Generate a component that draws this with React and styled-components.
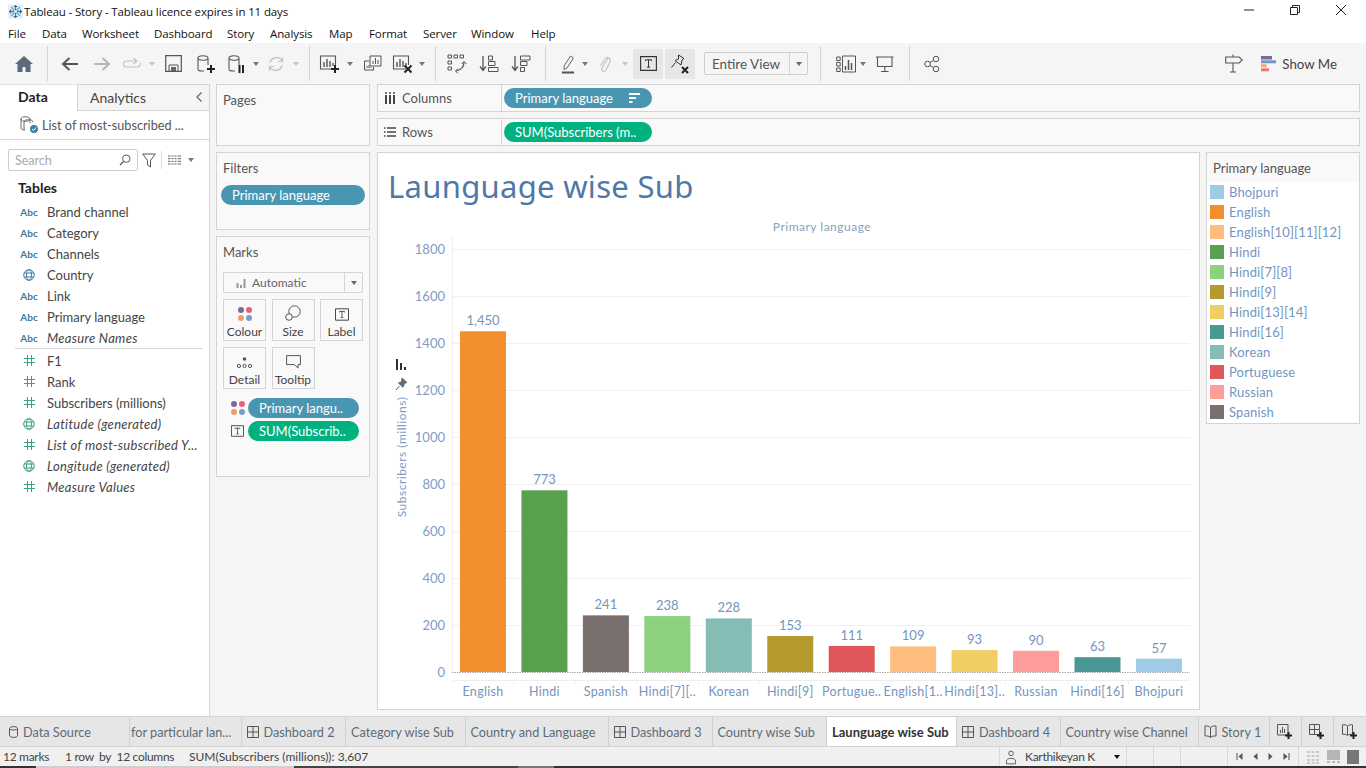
import React from 'react';
import styled, { createGlobalStyle } from 'styled-components';

const Global = createGlobalStyle`
  html, body { margin: 0; padding: 0; background: #f5f5f5; overflow: hidden; }
  * { box-sizing: border-box; }
`;

const Page = styled.div`
  width: 1366px; height: 768px; display: flex; flex-direction: column;
  font-family: "Lato", "Open Sans", sans-serif; color: #333; background: #f5f5f5; overflow: hidden;
`;
const TitleBar = styled.div`
  height: 22px; background: #fff; display: flex; align-items: center; padding: 0 2px 0 8px;
  font: 11.5px "Open Sans", sans-serif; color: #111;
`;
const TitleText = styled.span` margin-left: 1px; flex: 1; letter-spacing: -0.13px; `;
const WinBtn = styled.div` width: 46px; height: 20px; display: flex; align-items: center; justify-content: center; margin-bottom: 2px; `;
const MenuBar = styled.div`
  height: 21px; background: #fff; display: flex; align-items: center; padding-top: 1px;
  font: 11.5px "Open Sans", sans-serif; color: #111;
`;
const MenuItem = styled.span` width: ${p => p.$w}px; padding-left: ${p => p.$pl || 0}px; letter-spacing: -0.1px; `;
const Toolbar = styled.div` height: 41px; background: #f5f5f5; display: flex; align-items: center; padding-left: 8px; `;
const Slot = styled.div`
  width: ${p => p.$w}px; height: 30px; flex: none; display: flex; align-items: center; justify-content: center;
  margin-left: ${p => p.$ml || 0}px;
  background: ${p => p.$active ? '#e6e6e6' : 'transparent'};
`;
const SmallSlot = styled(Slot)` height: 22px; `;
const Sep = styled.div`
  width: ${p => p.$w}px; height: 35px; flex: none; position: relative; display: flex; justify-content: center;
  &::before { content: ""; width: 1px; height: 100%; background: #d4d4d4; }
`;
const Caret = styled.span`
  width: 0; height: 0; border-left: 3px solid transparent; border-right: 3px solid transparent;
  border-top: 4px solid ${p => p.$c || '#777'};
  margin-left: ${p => p.$ml || 0}px;
`;
const ViewSelect = styled.div`
  width: 104px; height: 23px; margin-left: 9px; flex: none; border: 1px solid #cfcfcf; border-radius: 2px; display: flex; align-items: center;
  font-size: 13.5px; color: #555; background: #f5f5f5;
`;
const ViewText = styled.span` flex: 1; padding-left: 7px; `;
const ViewDrop = styled.span` width: 18px; height: 100%; border-left: 1px solid #d4d4d4; display: flex; align-items: center; justify-content: center; `;
const ToolRight = styled.div` margin-left: auto; display: flex; align-items: center; padding-right: 29px; `;
const ShowMe = styled.div` display: flex; align-items: center; gap: 6px; font-size: 13.3px; color: #444; margin-left: 12px; `;

const Main = styled.div` flex: 1; display: flex; min-height: 0; `;
const LeftPanel = styled.div` width: 210px; flex: none; background: #fff; border-right: 1px solid #d4d4d4; display: flex; flex-direction: column; `;
const PanelTabs = styled.div` height: 27px; display: flex; background: #f5f5f5; `;
const DataTab = styled.div`
  width: 78px; background: #fff; border-right: 1px solid #d4d4d4; border-top: 1px solid #e4e4e4; font-weight: 700; font-size: 14px; color: #222;
  padding: 3px 0 0 18px;
`;
const AnalyticsTab = styled.div`
  flex: 1; border-top: 1px solid #d4d4d4; border-bottom: 1px solid #d4d4d4; font-size: 14px; color: #444; display: flex; align-items: center; justify-content: space-between;
  padding: 0 6px 1px 12px;
`;
const SourceRow = styled.div` height: 29px; border-bottom: 1px solid #d4d4d4; display: flex; align-items: center; gap: 2px; padding-left: 20px; font-size: 12.7px; color: #555; `;
const SearchRow = styled.div` height: 30px; margin-top: 9px; display: flex; align-items: flex-start; padding-left: 8px; `;
const SearchBox = styled.div`
  width: 130px; height: 22px; border: 1px solid #ccc; border-radius: 2px; display: flex; align-items: center; justify-content: space-between;
  padding: 0 6px; font-size: 12.5px; color: #aaa;
`;
const SearchTools = styled.div` display: flex; align-items: center; height: 22px; margin-left: 4px; `;
const MiniDivider = styled.span` width: 1px; height: 18px; background: #ddd; margin: 0 6px 0 5px; `;
const TablesHead = styled.div` font-weight: 700; font-size: 14px; color: #222; padding-left: 18px; height: 17px; line-height: 17px; margin-bottom: 5px; `;
const FieldRow = styled.div` height: 21px; display: flex; align-items: center; font-size: 13px; color: #444; padding-left: 20px; `;
const FieldIcon = styled.span` width: 18px; margin-right: 9px; flex: none; font-size: 10px; font-weight: 700; color: #3f7a9c; display: flex; align-items: center; justify-content: center; `;
const FieldName = styled.span` font-style: ${p => p.$i ? 'italic' : 'normal'}; letter-spacing: ${p => p.$i ? '0.3px' : '0'}; white-space: nowrap; `;
const FieldRule = styled.div` height: 1px; background: #d9d9d9; margin: 0 6px 1px 15px; `;

const MidCol = styled.div` width: 167px; flex: none; padding: 0 7px 0 6px; display: flex; flex-direction: column; gap: 6px; `;
const SideCard = styled.div`
  height: ${p => p.$h}px; background: #f9f9f9; border: 1px solid #d4d4d4; padding: 0 5px 0 6px;
`;
const CardTitle = styled.div` font-size: 13px; color: #555; line-height: 16px; padding-top: 7px; box-sizing: content-box; `;
const Pill = styled.div`
  height: 20px; border-radius: 10px; background: ${p => p.$green ? '#02b180' : '#4996b2'}; color: #fff; font-size: 13px; display: flex; align-items: center; justify-content: space-between;
  width: ${p => p.$w ? `${p.$w}px` : 'auto'}; padding: 0 12px 0 11px; white-space: nowrap; flex: none;
`;
const FilterPill = styled(Pill)` margin: 9px 0 0 -2px; width: 144px; `;
const MarkSelect = styled.div`
  height: 21px; margin: 12px 0 0 0; width: 140px; border: 1px solid #d4d4d4; border-radius: 1px; display: flex; align-items: center; font-size: 12px; color: #666; background: #f9f9f9;
`;
const MarkSelectText = styled.span` flex: 1; display: flex; align-items: center; gap: 6px; padding-left: 12px; `;
const MarkDrop = styled.span` width: 18px; height: 100%; border-left: 1px solid #d4d4d4; display: flex; align-items: center; justify-content: center; `;
const MarkGrid = styled.div` display: grid; grid-template-columns: 43px 43px 43px; column-gap: 5.5px; row-gap: 6px; margin-top: 6px; `;
const MarkBtn = styled.div`
  height: 42px; border: 1px solid #d4d4d4; display: flex; flex-direction: column; align-items: center; justify-content: flex-end; font-size: 12px; color: #444; padding-bottom: 1px; gap: 3px; white-space: nowrap;
`;
const MarkPillRow = styled.div` display: flex; align-items: center; margin-top: ${p => p.$mt}px; padding-left: 7px; gap: 3px; `;
const MarkPillIcon = styled.span` width: 15px; flex: none; display: flex; justify-content: center; `;

const RightCol = styled.div` flex: 1; min-width: 0; padding: 0 6px 7px 0; display: flex; flex-direction: column; gap: 6px; `;
const Shelf = styled.div` height: 28px; flex: none; display: flex; background: #f9f9f9; border: 1px solid #d4d4d4; `;
const ShelfLabel = styled.div` width: 124px; border-right: 1px solid #d4d4d4; display: flex; align-items: center; gap: 6px; padding-left: 6px; font-size: 13px; color: #555; `;
const ShelfBody = styled.div` flex: 1; display: flex; align-items: center; padding: 0 0 0 2px; `;
const VizRow = styled.div` flex: 1; min-height: 0; display: flex; gap: 6px; align-items: flex-start; `;
const VizCard = styled.div` width: 823px; height: 558px; flex: none; background: #fff; border: 1px solid #d4d4d4; `;
const VizTitle = styled.h1`
  margin: 0; height: 60px; padding: 15px 0 0 10px; font-weight: 400; font-size: 31px; line-height: 36px; color: #4e79a7; letter-spacing: 0.3px; font-family: "Noto Sans", sans-serif; white-space: nowrap;
`;
const ChartSvg = styled.svg` display: block; font-family: "Lato", sans-serif; `;
const Legend = styled.div` width: 154px; height: 272px; flex: none; background: #fff; border: 1px solid #d4d4d4; `;
const LegendHead = styled.div` height: 29px; background: #f9f9f9; font-size: 13px; color: #555; display: flex; align-items: center; padding-left: 6px; `;
const LegendRow = styled.div` height: 20px; display: flex; align-items: center; gap: 5px; padding-left: 3px; font-size: 13px; color: #7396c0; letter-spacing: 0.15px; `;
const Swatch = styled.span` width: 14px; height: 14px; flex: none; background: ${p => p.$c}; `;

const TabBar = styled.div` height: 31px; flex: none; display: flex; background: #e6e6e6; border-top: 1px solid #d4d4d4; border-bottom: 1px solid #d4d4d4; `;
const SheetTab = styled.div`
  width: ${p => p.$w}px; flex: none; border-right: 1px solid #d0d0d0; display: flex; align-items: center; gap: 5px; white-space: nowrap; overflow: hidden; justify-content: ${p => p.$center ? 'center' : 'flex-start'};
  padding-left: ${p => p.$pl ?? 5}px; font-size: ${p => p.$active ? 13 : 12.7}px; color: ${p => p.$active ? '#333' : '#5d6b78'};
  background: ${p => p.$active ? '#fff' : 'transparent'}; font-weight: ${p => p.$active ? 700 : 400};
`;
const StatusBar = styled.div` height: 19px; flex: none; display: flex; background: #f0f0f0; font-size: 12px; color: #444; `;
const StatusLeft = styled.div` flex: 1; display: flex; align-items: center; padding-left: 3px; white-space: nowrap; `;
const StatusText = styled.span` width: ${p => p.$w}px; flex: none; letter-spacing: -0.3px; `;
const StatusCell = styled.div`
  width: ${p => p.$w}px; flex: none; border-left: 1px solid #d9d9d9; display: flex; align-items: center; gap: ${p => p.$gap || 0}px; padding: 0 ${p => p.$pad || 0}px; justify-content: ${p => p.$j || 'flex-start'}; white-space: nowrap; letter-spacing: -0.3px;
`;
const BottomStrip = styled.div`
  height: 2px; flex: none;
  background: linear-gradient(90deg, #333 0 36px, #cfcfcf 36px 294px, #444 294px 518px, #777 518px 554px, #333 554px);
`;

const Ic = ({ w = 20, h = 20, children, ...r }) => (
  <svg width={w} height={h} viewBox={`0 0 ${w} ${h}`} fill="none" {...r}>{children}</svg>
);

const Logo = () => (
  <Ic w={15} h={15}>
    <rect width="15" height="15" fill="#e9f1f6" />
    <g stroke="#2f7fae" strokeWidth="1.300"><path d="M7.500 1v13M1 7.500h13" /></g>
    <g stroke="#5d9fc6" strokeWidth="1.100"><path d="M3 3l9 9M12 3l-9 9" /></g>
    <g stroke="#2a6a94" strokeWidth="1"><path d="M5.500 2.500h4M5.500 12.500h4M2.500 5.500v4M12.500 5.500v4" /></g>
    <rect x="6.300" y="6.300" width="2.400" height="2.400" fill="#fff" />
  </Ic>
);
const Home = () => <Ic w={20} h={18}><path d="M10 1 1 9h2.500v8h5v-5h3v5h5V9H19z" fill="#5c6b7a" /></Ic>;
const ArrowL = ({ c = '#555' }) => <Ic w={18} h={16}><path d="M17 8H2M8.500 2 2 8l6.500 6" stroke={c} strokeWidth="2" /></Ic>;
const ArrowR = ({ c = '#b5b5b5' }) => <Ic w={18} h={16}><path d="M1 8h15M9.500 2 16 8l-6.500 6" stroke={c} strokeWidth="2" /></Ic>;
const Redo = () => <Ic w={20} h={14}><path d="M14 4H4.500a3 3 0 0 0 0 6h11a3 3 0 0 0 2.500-4M11.500 1 15 4l-3.500 3" stroke="#c4c4c4" strokeWidth="1.200" /></Ic>;
const Save = () => <Ic w={17} h={17}><path d="M.7.700h15.600v15.600H.7z" stroke="#555" strokeWidth="1.200" /><path d="M4 16v-6h9v6" stroke="#555" /><path d="M6 12h5v4H6z" fill="#666" /></Ic>;
const Cyl = ({ children }) => (
  <Ic w={20} h={20}>
    <path d="M2 4c0-3 10-3 10 0v7M2 4c0 3 10 3 10 0M2 4v11c0 1.500 2 2 4 2h2" stroke="#555" strokeWidth="1.100" />
    {children}
  </Ic>
);
const Plus = ({ x, y, s = 4, c = '#222' }) => <path d={`M${x - s} ${y}h${2 * s}M${x} ${y - s}v${2 * s}`} stroke={c} strokeWidth="2" />;
const Cross = ({ x, y, s = 3.500 }) => <path d={`M${x - s} ${y - s}l${2 * s} ${2 * s}M${x + s} ${y - s}l${-2 * s} ${2 * s}`} stroke="#222" strokeWidth="2" />;
const Refresh = () => <Ic w={18} h={18}><path d="M3 7.500A6.500 6.500 0 0 1 15 6M15 10.500A6.500 6.500 0 0 1 3 12" stroke="#c4c4c4" strokeWidth="1.500" /><path d="M15.500 2v4.500H11M2.500 16v-4.500H7" stroke="#c4c4c4" strokeWidth="1.200" /></Ic>;
const Sheet = ({ children }) => (
  <Ic w={22} h={20}>
    <path d="M14 15H1.500V2h15v9" stroke="#555" strokeWidth="1.100" />
    <path d="M5 13V8M8 13V5M11 13V7M14 12V9" stroke="#555" strokeWidth="1.400" />
    {children}
  </Ic>
);
const Dup = () => (
  <Ic w={20} h={18}>
    <path d="M7 1h11v10H7z" stroke="#555" /><path d="M10 9V6M12.500 9V3M15 9V5" stroke="#555" />
    <path d="M6 6H1.500v9h9v-3" stroke="#555" /><path d="M4 13v-2M6 13v-3M8 13v-1" stroke="#555" />
  </Ic>
);
const Swap = () => (
  <Ic w={20} h={20}>
    <path d="M1 1h3.500v3H1zM7 1h3.500v3H7zM13 1h3.500v3H13zM1 7h3.500v3H1zM1 13h3.500v3H1z" stroke="#555" />
    <path d="M17 8c0 5-3 8-8 9" stroke="#555" strokeWidth="1.200" /><path d="M14.500 10 17 7.500l2.500 2.500M11 14.500 8.500 17l2.500 2.500" stroke="#555" />
  </Ic>
);
const SortA = () => (
  <Ic w={20} h={18}>
    <path d="M4 1v14M1 11.500 4 15.500l3-4" stroke="#555" strokeWidth="1.300" />
    <path d="M9.500 1h4v4h-4zM9.500 6.500h6.500v4H9.500zM9.500 12.500h9.500v4H9.500z" stroke="#555" />
  </Ic>
);
const SortD = () => (
  <Ic w={20} h={18}>
    <path d="M4 1v14M1 11.500 4 15.500l3-4" stroke="#555" strokeWidth="1.300" />
    <path d="M9.500 1h9.500v4H9.500zM9.500 6.500h6.500v4H9.500zM9.500 12.500h4v4h-4z" stroke="#555" />
  </Ic>
);
const Pen = () => (
  <Ic w={14} h={20}><path d="M3 12 9.500 2l3 2L6 14l-3 1.500z" stroke="#666" /><path d="M1 18.500h12" stroke="#555" strokeWidth="2" /></Ic>
);
const Clip = () => (
  <Ic w={14} h={20}><path d="M10 4 4 14c-1.500 3 2.500 4.500 4 2l4-8c1.500-4-3-6-5-3L2.500 12" stroke="#c4c4c4" strokeWidth="1.200" /></Ic>
);
const TBox = ({ s = 15, w = 17 }) => (
  <svg width={w} height={s} viewBox="0 0 17 15" fill="none"><path d="M.6.600h15.800v13.800H.6z" stroke="#333" strokeWidth="1.100" /><path d="M5.500 5V3.800h6V5M8.500 3.800v7.400M7 11.200h3" stroke="#333" /></svg>
);
const PinX = () => (
  <Ic w={22} h={22}>
    <path d="M9.500 2l5.500 3.500-2 1.500-1 5-6-4.500 3.500-1.500zM6.500 9.500 2.500 14.500" stroke="#333" strokeWidth="1" />
    <Cross x={16} y={17} s={3} />
  </Ic>
);
const ShowTable = () => (
  <Ic w={20} h={18}>
    <path d="M.7 2h3.500v3.500H.7zM.7 7.500h3.500V11H.7zM.7 13h3.500v3.500H.7z" stroke="#555" />
    <path d="M6.500 1h13v16h-13z" stroke="#555" /><path d="M9.500 15v-4M12.500 15V5M15.500 15V8" stroke="#555" strokeWidth="1.500" />
  </Ic>
);
const Present = () => (
  <Ic w={18} h={18}><path d="M0 2h17.500M1.500 2v9.500h14.500V2M8.800 11.500v4.500M5 16.500h7.500" stroke="#555" strokeWidth="1.100" /></Ic>
);
const Share = () => (
  <Ic w={16} h={18}>
    <circle cx="3.500" cy="9" r="2.800" stroke="#555" /><circle cx="12" cy="4" r="2.800" stroke="#555" /><circle cx="12" cy="14" r="2.800" stroke="#555" />
    <path d="M6 7.500 9.500 5.500M6 10.500 9.500 12.500" stroke="#555" />
  </Ic>
);
const Guide = () => (
  <Ic w={18} h={19}><path d="M.7 3h13.500l3 3-3 3H.7zM8 3V.5M8 9v9M5 18h6" stroke="#555" strokeWidth="1.100" /></Ic>
);
const ShowMeIcon = () => (
  <Ic w={15} h={16}>
    <path d="M0 0h11v3.500H0z" fill="#7b6a94" /><path d="M0 4.300h15v3H0z" fill="#6f97c9" /><path d="M0 8.300h5.500v3H0z" fill="#f0a479" /><path d="M0 12.300h8v3H0z" fill="#ee7479" />
  </Ic>
);
const Chevron = () => <Ic w={8} h={12}><path d="M6.500 1.500 2 6l4.500 4.500" stroke="#666" strokeWidth="1.200" /></Ic>;
const DsIcon = () => (
  <Ic w={20} h={20}>
    <path d="M1 4c0-3 9-3 9 0v4M1 4c0 3 9 3 9 0M1 4v9c0 1.500 2 2 4 2" stroke="#666" />
    <path d="M4 7c0-3 9-3 9 0M4 7v8" stroke="#666" />
    <circle cx="14" cy="14" r="4" fill="#3f7fa3" /><path d="M12 14l1.500 1.500 2.500-3" stroke="#fff" />
  </Ic>
);
const Mag = () => <Ic w={12} h={12}><circle cx="7.300" cy="4.700" r="3.700" stroke="#555" /><path d="M4.500 7.500 1 11" stroke="#555" strokeWidth="1.300" /></Ic>;
const Funnel = () => <Ic w={14} h={15}><path d="M.7 1h12.600L8.500 7.500V14l-3-2V7.500z" stroke="#555" /></Ic>;
const GridList = () => <Ic w={13} h={10}><path d="M0 1h13M0 3.700h13M0 6.300h13M0 9h13" stroke="#666" /><path d="M3 0v10M6 0v10M9 0v10" stroke="#fff" /></Ic>;
const Globe = ({ c }) => (
  <Ic w={12} h={12}><circle cx="6" cy="6" r="5.300" stroke={c} /><ellipse cx="6" cy="6" rx="2.500" ry="5.300" stroke={c} /><path d="M1 4h10M1 8h10" stroke={c} /></Ic>
);
const Hash = () => <Ic w={11} h={11}><path d="M3.500 0v11M7.500 0v11M0 3.500h11M0 7.500h11" stroke="#3fa07f" /></Ic>;
const Dots = ({ s = 14 }) => (
  <svg width={s} height={s} viewBox="0 0 14 14">
    <circle cx="3" cy="3" r="3" fill="#7b6a94" /><circle cx="11" cy="3" r="3" fill="#ec5f78" /><circle cx="3" cy="11" r="3" fill="#ef9d6f" /><circle cx="11" cy="11" r="3" fill="#7b9cc8" />
  </svg>
);
const SizeI = () => <Ic w={16} h={16}><circle cx="9.500" cy="6.500" r="5.700" stroke="#555" /><circle cx="4" cy="12" r="3.300" stroke="#555" fill="#f9f9f9" /></Ic>;
const DetailI = () => <Ic w={15} h={12}><circle cx="7.500" cy="2" r="1.800" fill="#555" /><circle cx="2" cy="9" r="1.600" stroke="#555" /><circle cx="7.500" cy="9" r="1.600" stroke="#555" /><circle cx="13" cy="9" r="1.600" stroke="#555" /></Ic>;
const TipI = () => <Ic w={15} h={14}><path d="M.6.600h13.800v9H12v3.500l-3.500-3.500H.6z" stroke="#555" /></Ic>;
const ColsI = () => <Ic w={12} h={12}><path d="M2 3v9M6 3v9M10 3v9" stroke="#444" strokeWidth="2" /><path d="M1 1h2M5 1h2M9 1h2" stroke="#444" strokeWidth="1.500" /></Ic>;
const RowsI = () => <Ic w={12} h={10}><path d="M3 1h9M3 5h9M3 9h9M0 1h1.500M0 5h1.500M0 9h1.500" stroke="#444" strokeWidth="1.500" /></Ic>;
const SortPill = () => <Ic w={11} h={10}><path d="M0 1h11M0 5h7M0 9h3.500" stroke="#fff" strokeWidth="1.800" /></Ic>;
const AutoI = () => <Ic w={10} h={10}><path d="M1.500 10V5M5 10V7M8.500 10V1" stroke="#999" strokeWidth="2" /></Ic>;
const TabGrid = () => <Ic w={12} h={12}><path d="M.5.500h11v11H.5zM6 .5v11M.5 6h11" stroke="#555" /></Ic>;
const TabDb = () => <Ic w={9} h={12}><path d="M.5 2.500c0-2.500 8-2.500 8 0v7c0 2.500-8 2.500-8 0zM.5 2.500c0 2 8 2 8 0" stroke="#555" /></Ic>;
const TabBook = () => <Ic w={13} h={13}><path d="M6.500 2.500C5 1 3 .8 1 1v10c2-.2 4 0 5.500 1.500C8 11 10 10.800 12 11V1c-2-.2-4 0-5.500 1.500zM6.500 2.500v10" stroke="#555" /></Ic>;
const AddSheet = () => <Ic w={16} h={16}><path d="M11 11H.5V.5h10.500z" stroke="#555" /><path d="M3.500 9V6M5.500 9V3M7.500 9V5" stroke="#555" /><Plus x={11.500} y={11.500} s={3.500} /></Ic>;
const AddDash = () => <Ic w={16} h={16}><path d="M.5.500h10v10H.5zM5.500.5v10M.5 5.500h10" stroke="#555" /><Plus x={11.500} y={11.500} s={3.500} /></Ic>;
const AddStory = () => <Ic w={16} h={16}><path d="M5.500 2C4 .8 2.500.5.500.8v9.500c2-.2 3.500 0 5 1.200 1.500-1.200 3-1.400 5-1.200V.8C8.500.5 7 .8 5.500 2zM5.500 2v9" stroke="#555" /><Plus x={11.500} y={11.500} s={3.500} /></Ic>;
const UserI = () => <Ic w={11} h={16}><circle cx="5.500" cy="4" r="2.500" stroke="#555" /><path d="M.5 15.500v-3c0-2 2-3 5-3s5 1 5 3v3z" stroke="#555" /></Ic>;
const Nav = ({ dir, bar }) => (
  <Ic w={8} h={9} style={{ transform: dir === 'l' ? 'scaleX(-1)' : 'none' }}>
    <path d="M1.500 1l4 3.500-4 3.500z" fill="#555" />{bar && <path d="M7 1v7" stroke="#555" />}
  </Ic>
);
const ViewDots = () => <Ic w={14} h={14}><path d="M1 2h12M1 6h12M1 10h12M1 13h12" stroke="#c9c9c9" strokeWidth="2" strokeDasharray="3 1.500" /></Ic>;
const ViewQuad = () => <Ic w={13} h={14}><path d="M0 0h13v10H0z" fill="#b5b5b5" /><path d="M0 12h3M5 12h3M10 12h3" stroke="#bbb" strokeWidth="2" /></Ic>;
const ViewFull = () => <Ic w={12} h={14}><path d="M0 0h12v14H0z" fill="#777" /></Ic>;

const C = {
  Bhojpuri: '#a0cbe8', English: '#f28e2b', E10: '#ffbe7d', Hindi: '#59a14f', H78: '#8cd17d', H9: '#b6992d',
  H13: '#f1ce63', H16: '#499894', Korean: '#86bcb6', Portuguese: '#e15759', Russian: '#ff9d9a', Spanish: '#79706e',
};
const legendItems = [
  ['Bhojpuri', C.Bhojpuri], ['English', C.English], ['English[10][11][12]', C.E10], ['Hindi', C.Hindi],
  ['Hindi[7][8]', C.H78], ['Hindi[9]', C.H9], ['Hindi[13][14]', C.H13], ['Hindi[16]', C.H16],
  ['Korean', C.Korean], ['Portuguese', C.Portuguese], ['Russian', C.Russian], ['Spanish', C.Spanish],
];
const bars = [
  ['English', 1450, '1,450', C.English], ['Hindi', 773, '773', C.Hindi], ['Spanish', 241, '241', C.Spanish],
  ['Hindi[7][..', 238, '238', C.H78], ['Korean', 228, '228', C.Korean], ['Hindi[9]', 153, '153', C.H9],
  ['Portugue..', 111, '111', C.Portuguese], ['English[1..', 109, '109', C.E10], ['Hindi[13]..', 93, '93', C.H13],
  ['Russian', 90, '90', C.Russian], ['Hindi[16]', 63, '63', C.H16], ['Bhojpuri', 57, '57', C.Bhojpuri],
];
const yOf = v => 672 - v * 0.235;
const ticks = [0, 200, 400, 600, 800, 1000, 1200, 1400, 1600, 1800];

const Chart = () => (
  <ChartSvg width="821" height="496" viewBox="378 213 821 496">
    <text x="822" y="231" textAnchor="middle" fontSize="12" fill="#8a9fbd" letterSpacing=".5">Primary language</text>
    <path d="M452.500 236v436" stroke="#f0f0f0" />
    {ticks.slice(1).map(t => <path key={t} d={`M452 ${Math.round(yOf(t)) + .5}H1190`} stroke="#f0f0f0" />)}
    {ticks.map(t => (
      <text key={t} x="445" y={yOf(t) + 4.500} textAnchor="end" fontSize="13" fill="#7d9dc7">{t}</text>
    ))}
    <text transform="translate(406 457) rotate(-90)" textAnchor="middle" fontSize="12" fill="#7d9dc7" letterSpacing=".5">Subscribers (millions)</text>
    <g transform="translate(396 359)"><path d="M1 0v11M5 4v7M9 8v3" stroke="#333" strokeWidth="2" /></g>
    <g transform="translate(395 378)"><path d="M7 0l5 4.500-2.500.8-1.500 4L3.500 5l3-1.200zM4.500 8 1 12" fill="#5f6a75" stroke="#5f6a75" /></g>
    {bars.map(([label, v, text, color], i) => {
      const x = 460 + i * 61.45;
      const top = yOf(v);
      return (
        <g key={label}>
          <rect x={x} y={top} width="46" height={672 - top} fill={color} />
          <text x={x + 23} y={top - 6} textAnchor="middle" fontSize="13" fill="#7396c0">{text}</text>
          <text x={x + 23} y="696" textAnchor="middle" fontSize="12.500" fill="#7396c0" letterSpacing=".3">{label}</text>
          <path d={`M${Math.round(452 + i * 61.45) + .5} 680v4`} stroke="#eee" />
        </g>
      );
    })}
    <path d="M452 672.500H1190" stroke="#aaa" strokeDasharray="1.500 1" />
    <path d="M452 680.500H1190" stroke="#eee" />
  </ChartSvg>
);

const dimensions = [
  ['Brand channel'], ['Category'], ['Channels'], ['Country', 'globe'], ['Link'], ['Primary language'], ['Measure Names', null, true],
];
const measures = [
  ['F1'], ['Rank'], ['Subscribers (millions)'], ['Latitude (generated)', 'globe', true],
  ['List of most-subscribed Y...', null, true], ['Longitude (generated)', 'globe', true], ['Measure Values', null, true],
];
const menus = [
  ['File', 42, 8], ['Data', 40], ['Worksheet', 72], ['Dashboard', 73], ['Story', 43], ['Analysis', 59], ['Map', 40], ['Format', 54], ['Server', 48], ['Window', 60], ['Help', 40],
];
const tabs = [
  { t: 'Data Source', w: 130, icon: <TabDb />, pl: 9 },
  { t: 'for particular lan...', w: 111.500, pl: 1 },
  { t: 'Dashboard 2', w: 104.500, icon: <TabGrid /> },
  { t: 'Category wise Sub', w: 119.500 },
  { t: 'Country and Language', w: 143 },
  { t: 'Dashboard 3', w: 104, icon: <TabGrid /> },
  { t: 'Country wise Sub', w: 114.500 },
  { t: 'Launguage wise Sub', w: 130, active: true },
  { t: 'Dashboard 4', w: 103.500, icon: <TabGrid /> },
  { t: 'Country wise Channel', w: 138 },
  { t: 'Story 1', w: 71, icon: <TabBook /> },
];

export default function App() {
  return (
    <Page>
      <Global />
      <TitleBar>
        <Logo />
        <TitleText>Tableau - Story - Tableau licence expires in 11 days</TitleText>
        <WinBtn><Ic w={12} h={12}><path d="M1 6h10" stroke="#222" /></Ic></WinBtn>
        <WinBtn><Ic w={12} h={12}><path d="M1.500 3.500h7v7h-7zM3.500 3.500v-2h7v7h-2" stroke="#222" /></Ic></WinBtn>
        <WinBtn><Ic w={12} h={12}><path d="M1 1l10 10M11 1 1 11" stroke="#222" /></Ic></WinBtn>
      </TitleBar>
      <MenuBar>
        {menus.map(([m, w, pl]) => <MenuItem key={m} $w={w} $pl={pl}>{m}</MenuItem>)}
      </MenuBar>
      <Toolbar>
        <Slot $w={32}><Home /></Slot>
        <Sep $w={14} />
        <Slot $w={32}><ArrowL /></Slot>
        <Slot $w={32}><ArrowR /></Slot>
        <Slot $w={28}><Redo /></Slot>
        <Slot $w={12}><Caret $c="#c4c4c4" /></Slot>
        <Slot $w={31}><Save /></Slot>
        <Slot $w={33}><Cyl><Plus x={15} y={15} /></Cyl></Slot>
        <Slot $w={30}><Cyl><path d="M12.500 11v8M16 11v8" stroke="#222" strokeWidth="2" /></Cyl></Slot>
        <Slot $w={8}><Caret /></Slot>
        <Slot $w={32}><Refresh /></Slot>
        <Slot $w={8}><Caret $c="#c4c4c4" /></Slot>
        <Sep $w={18} />
        <Slot $w={24}><Sheet><Plus x={16} y={15} /></Sheet></Slot>
        <Slot $w={16}><Caret /></Slot>
        <Slot $w={30}><Dup /></Slot>
        <Slot $w={30}><Sheet><Cross x={16} y={15} /></Sheet></Slot>
        <Slot $w={8}><Caret /></Slot>
        <Sep $w={18} />
        <Slot $w={26}><Swap /></Slot>
        <Slot $w={38}><SortA /></Slot>
        <Slot $w={26}><SortD /></Slot>
        <Sep $w={22} />
        <Slot $w={24}><Pen /></Slot>
        <Slot $w={10}><Caret /></Slot>
        <Slot $w={30}><Clip /></Slot>
        <Slot $w={10}><Caret $c="#c4c4c4" /></Slot>
        <Slot $w={30} $ml={3} $active><TBox /></Slot>
        <Slot $w={30} $ml={2} $active><PinX /></Slot>
        <ViewSelect>
          <ViewText>Entire View</ViewText>
          <ViewDrop><Caret $c="#666" /></ViewDrop>
        </ViewSelect>
        <Sep $w={24} />
        <Slot $w={28}><ShowTable /></Slot>
        <Slot $w={6}><Caret /></Slot>
        <Slot $w={38}><Present /></Slot>
        <Sep $w={10} />
        <Slot $w={36}><Share /></Slot>
        <ToolRight>
          <Slot $w={30}><Guide /></Slot>
          <ShowMe><ShowMeIcon />Show Me</ShowMe>
        </ToolRight>
      </Toolbar>
      <Main>
        <LeftPanel>
          <PanelTabs>
            <DataTab>Data</DataTab>
            <AnalyticsTab>Analytics<Chevron /></AnalyticsTab>
          </PanelTabs>
          <SourceRow><DsIcon />List of most-subscribed ...</SourceRow>
          <SearchRow>
            <SearchBox>Search<Mag /></SearchBox>
            <SearchTools>
              <Funnel />
              <MiniDivider />
              <GridList />
              <SmallSlot $w={20}><Caret /></SmallSlot>
            </SearchTools>
          </SearchRow>
          <TablesHead>Tables</TablesHead>
          {dimensions.map(([n, g, i]) => (
            <FieldRow key={n}>
              <FieldIcon>{g ? <Globe c="#3f7fa3" /> : 'Abc'}</FieldIcon>
              <FieldName $i={i}>{n}</FieldName>
            </FieldRow>
          ))}
          <FieldRule />
          {measures.map(([n, g, i]) => (
            <FieldRow key={n}>
              <FieldIcon>{g ? <Globe c="#3fa07f" /> : <Hash />}</FieldIcon>
              <FieldName $i={i}>{n}</FieldName>
            </FieldRow>
          ))}
        </LeftPanel>
        <MidCol>
          <SideCard $h={62}><CardTitle>Pages</CardTitle></SideCard>
          <SideCard $h={78}>
            <CardTitle>Filters</CardTitle>
            <FilterPill>Primary language</FilterPill>
          </SideCard>
          <SideCard $h={241}>
            <CardTitle>Marks</CardTitle>
            <MarkSelect>
              <MarkSelectText><AutoI />Automatic</MarkSelectText>
              <MarkDrop><Caret $c="#666" /></MarkDrop>
            </MarkSelect>
            <MarkGrid>
              <MarkBtn><Dots />Colour</MarkBtn>
              <MarkBtn><SizeI />Size</MarkBtn>
              <MarkBtn><TBox s={13} w={14} />Label</MarkBtn>
              <MarkBtn><DetailI />Detail</MarkBtn>
              <MarkBtn><TipI />Tooltip</MarkBtn>
            </MarkGrid>
            <MarkPillRow $mt={9}>
              <MarkPillIcon><Dots /></MarkPillIcon>
              <Pill $w={111}>Primary langu..</Pill>
            </MarkPillRow>
            <MarkPillRow $mt={3}>
              <MarkPillIcon><TBox s={12} w={13} /></MarkPillIcon>
              <Pill $w={111} $green>SUM(Subscrib..</Pill>
            </MarkPillRow>
          </SideCard>
        </MidCol>
        <RightCol>
          <Shelf>
            <ShelfLabel><ColsI />Columns</ShelfLabel>
            <ShelfBody><Pill $w={148}>Primary language<SortPill /></Pill></ShelfBody>
          </Shelf>
          <Shelf>
            <ShelfLabel><RowsI />Rows</ShelfLabel>
            <ShelfBody><Pill $w={148} $green>SUM(Subscribers (m..</Pill></ShelfBody>
          </Shelf>
          <VizRow>
            <VizCard>
              <VizTitle>Launguage wise Sub</VizTitle>
              <Chart />
            </VizCard>
            <Legend>
              <LegendHead>Primary language</LegendHead>
              {legendItems.map(([n, c]) => <LegendRow key={n}><Swatch $c={c} />{n}</LegendRow>)}
            </Legend>
          </VizRow>
        </RightCol>
      </Main>
      <TabBar>
        {tabs.map(tb => (
          <SheetTab key={tb.t} $w={tb.w} $pl={tb.pl} $active={tb.active}>{tb.icon}{tb.t}</SheetTab>
        ))}
        <SheetTab $w={32} $pl={0} $center><AddSheet /></SheetTab>
        <SheetTab $w={32} $pl={0} $center><AddDash /></SheetTab>
        <SheetTab $w={33} $pl={0} $center><AddStory /></SheetTab>
      </TabBar>
      <StatusBar>
        <StatusLeft>
          <StatusText $w={62}>12 marks</StatusText>
          <StatusText $w={124}>1 row&nbsp; by&nbsp; 12 columns</StatusText>
          <span>SUM(Subscribers (millions)): 3,607</span>
        </StatusLeft>
        <StatusCell $w={127} $pad={6} $gap={9}><UserI />Karthikeyan K<Caret $c="#111" $ml={10} /></StatusCell>
        <StatusCell $w={27} />
        <StatusCell $w={27} />
        <StatusCell $w={47} />
        <StatusCell $w={71} $j="space-around" $pad={4}><Nav dir="l" bar /><Nav dir="l" /><Nav /><Nav bar /></StatusCell>
        <StatusCell $w={68} $j="space-between" $pad={7}><ViewDots /><ViewQuad /><ViewFull /></StatusCell>
      </StatusBar>
      <BottomStrip />
    </Page>
  );
}
